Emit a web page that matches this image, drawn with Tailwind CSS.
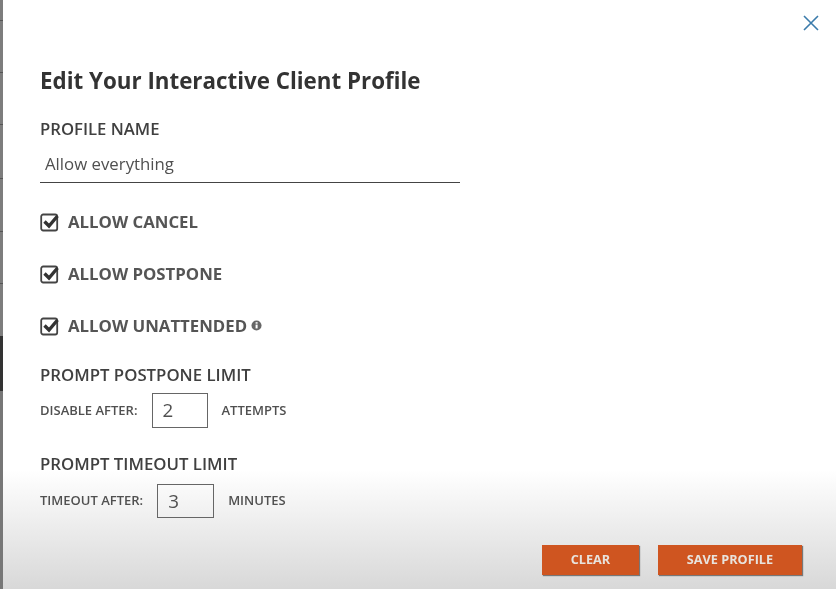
<!DOCTYPE html>
<html><head><meta charset="utf-8"><script src="https://cdn.jsdelivr.net/npm/@tailwindcss/browser@4"></script></head>
<body class="m-0">
<div class="w-[836px] h-[589px] overflow-hidden flex font-['Open_Sans',sans-serif] text-[#3f3f3f] bg-white blur-[0.4px]">
  <div class="w-[3px] h-full flex flex-col shrink-0 bg-[#7d7d7d]">
    <div class="h-[21px] border-b border-[#555]"></div>
    <div class="h-[52px] border-b border-[#555]"></div>
    <div class="h-[52px] border-b border-[#555]"></div>
    <div class="h-[54px] border-b border-[#555]"></div>
    <div class="h-[53px] border-b border-[#555]"></div>
    <div class="h-[52px] border-b border-[#555]"></div>
    <div class="h-[52px]"></div>
    <div class="h-[55px] bg-[#333]"></div>
    <div class="flex-1 bg-[#777]"></div>
  </div>
  <div class="flex-1 relative flex flex-col bg-[linear-gradient(to_bottom,#ffffff_0,#ffffff_470px,#d8d8d8_589px)]">
    <button class="absolute top-[14px] right-[16.5px] w-[18px] h-[18px] p-0">
      <svg viewBox="0 0 18 18" class="w-[18px] h-[18px]" fill="none" stroke="#3b7bab" stroke-width="1.6"><path d="M2 2 L16 16 M16 2 L2 16"/></svg>
    </button>
    <div class="pl-[37px] pt-[65px] flex flex-col">
      <h1 class="m-0 text-[22.35px] leading-[32px] font-bold text-[#333]">Edit Your Interactive Client Profile</h1>
      <div class="mt-[21px] text-[16.7px] leading-[22px] font-semibold text-[#404040]">PROFILE NAME</div>
      <div class="mt-[12px] w-[420px] h-[31px] border-b border-[#444] pl-[5px] text-[16.8px] leading-[24px] text-[#505050]">Allow everything</div>
      <div class="mt-[27px] flex flex-col gap-[29px]">
        <div class="flex items-center h-[23px] gap-[9px] text-[16.8px] font-bold text-[#555]">
          <svg viewBox="0 0 19 20" class="w-[19px] h-[20px]" fill="none"><rect x="1.2" y="2.5" width="16" height="16" rx="2" stroke="#444" stroke-width="1.8"/><path d="M4.5 9.5 L9 14 L17.5 4" stroke="#333" stroke-width="3.4"/></svg>
          <span>ALLOW CANCEL</span>
        </div>
        <div class="flex items-center h-[23px] gap-[9px] text-[16.8px] font-bold text-[#555]">
          <svg viewBox="0 0 19 20" class="w-[19px] h-[20px]" fill="none"><rect x="1.2" y="2.5" width="16" height="16" rx="2" stroke="#444" stroke-width="1.8"/><path d="M4.5 9.5 L9 14 L17.5 4" stroke="#333" stroke-width="3.4"/></svg>
          <span>ALLOW POSTPONE</span>
        </div>
        <div class="flex items-center h-[23px] gap-[9px] text-[16.8px] font-bold text-[#555]">
          <svg viewBox="0 0 19 20" class="w-[19px] h-[20px]" fill="none"><rect x="1.2" y="2.5" width="16" height="16" rx="2" stroke="#444" stroke-width="1.8"/><path d="M4.5 9.5 L9 14 L17.5 4" stroke="#333" stroke-width="3.4"/></svg>
          <span class="flex items-center gap-[4px]">ALLOW UNATTENDED
            <svg viewBox="0 0 12 12" class="w-[11px] h-[11px]"><circle cx="6" cy="6" r="5.5" fill="#666"/><rect x="5" y="5" width="2.2" height="4.2" fill="#fff"/><rect x="5" y="2.4" width="2.2" height="1.6" fill="#fff"/></svg>
          </span>
        </div>
      </div>
      <div class="mt-[27px] text-[16.8px] leading-[22px] font-semibold text-[#404040]">PROMPT POSTPONE LIMIT</div>
      <div class="mt-[7px] flex items-center h-[35px] text-[13px] font-semibold text-[#505050]">
        <span>DISABLE AFTER:</span>
        <div class="ml-[14px] w-[56px] h-[35px] border border-[#666] pl-[10px] text-[18.8px] font-normal leading-[33px] text-[#505050]">2</div>
        <span class="ml-[14px]">ATTEMPTS</span>
      </div>
      <div class="mt-[25px] text-[16.8px] leading-[22px] font-semibold text-[#404040]">PROMPT TIMEOUT LIMIT</div>
      <div class="mt-[9px] flex items-center h-[34px] text-[13px] font-semibold text-[#505050]">
        <span>TIMEOUT AFTER:</span>
        <div class="ml-[14px] w-[57px] h-[34px] border border-[#666] pl-[10px] text-[18.8px] font-normal leading-[32px] text-[#505050]">3</div>
        <span class="ml-[14px]">MINUTES</span>
      </div>
      <div class="mt-[27px] self-end mr-[34px] flex gap-[19px]">
        <button class="w-[97px] h-[30px] bg-[#cf5520] text-[#e8e3dd] text-[12.7px] font-bold shadow-[1px_1px_1px_#777]">CLEAR</button>
        <button class="w-[144px] h-[30px] bg-[#cf5520] text-[#e8e3dd] text-[12.7px] font-bold shadow-[1px_1px_1px_#777]">SAVE PROFILE</button>
      </div>
    </div>
  </div>
</div>
</body></html>
